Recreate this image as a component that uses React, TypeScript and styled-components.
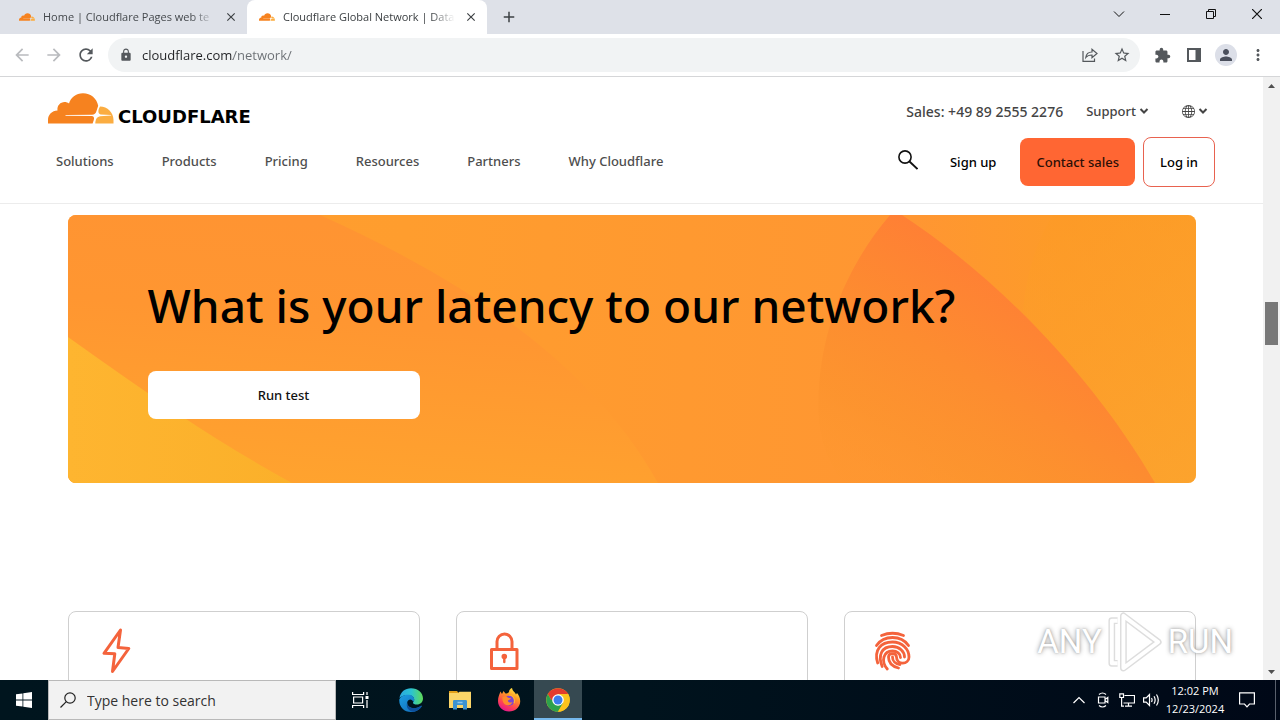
import React from "react";
import styled, { createGlobalStyle } from "styled-components";
import {
  MdArrowBack,
  MdArrowForward,
  MdRefresh,
  MdLock,
  MdStarBorder,
  MdExtension,
  MdPerson,
  MdMoreVert,
  MdClose,
  MdAdd,
} from "react-icons/md";
import { BsGlobe } from "react-icons/bs";

const GlobalStyle = createGlobalStyle`
  * { box-sizing: border-box; }
  body { margin: 0; font-family: "Noto Sans", "Open Sans", sans-serif; color: #222; background: #fff; }
  button, input { font-family: inherit; }
  button { border: 0; padding: 0; background: none; color: inherit; }
  a { color: inherit; text-decoration: none; }
  svg { display: block; flex: none; }
  h2 { margin: 0; }
`;

const Screen = styled.div`
  display: flex;
  flex-direction: column;
  height: 100vh;
  overflow: hidden;
`;

/* ---------- browser chrome ---------- */

const TabStrip = styled.div`
  display: flex;
  height: 34px;
  padding-left: 7px;
  background: #dee1e8;
`;

const Tab = styled.div<{ $active?: boolean }>`
  display: flex;
  align-items: center;
  gap: 8px;
  width: 240px;
  padding: 0 8px 0 12px;
  border-radius: 8px 8px 0 0;
  background: ${(p) => (p.$active ? "#fff" : "transparent")};
  color: ${(p) => (p.$active ? "#3c4043" : "#45494d")};
`;

const TabTitle = styled.span`
  flex: 1;
  min-width: 0;
  white-space: nowrap;
  font-family: "Open Sans", sans-serif;
  font-size: 11px;
  line-height: 16px;
  mask-image: linear-gradient(90deg, #000 86%, transparent);
`;

const TabButton = styled.button`
  display: grid;
  place-items: center;
  width: 16px;
  height: 16px;
  color: #3c4043;
`;

const NewTab = styled(TabButton)`
  align-self: center;
  width: 28px;
  height: 28px;
  margin-left: 8px;
`;

const WindowControls = styled.div`
  display: flex;
  margin-left: auto;
`;

const WindowButton = styled.button`
  display: grid;
  place-items: center;
  width: 46px;
  height: 28px;
  color: #111;
`;

const Toolbar = styled.div`
  display: flex;
  align-items: center;
  height: 43px;
  padding: 0 6px;
  border-bottom: 1px solid #d5d6d8;
`;

const ToolButton = styled.button<{ $dim?: boolean }>`
  display: grid;
  place-items: center;
  width: 32px;
  height: 32px;
  color: ${(p) => (p.$dim ? "#b9bbbe" : "#54585c")};
`;

const Avatar = styled.span`
  display: grid;
  place-items: center;
  width: 22px;
  height: 22px;
  border-radius: 50%;
  background: #dcdfe8;
  color: #4a4f5c;
`;

const Omnibox = styled.label`
  display: flex;
  align-items: center;
  gap: 9px;
  flex: 1;
  height: 34px;
  margin: 0 6px;
  padding: 0 2px 0 11px;
  border-radius: 17px;
  background: #f1f3f4;
  color: #54585c;
`;

const Address = styled.input`
  flex: 1;
  min-width: 0;
  padding: 0;
  border: 0;
  outline: 0;
  font-family: "Open Sans", sans-serif;
  font-size: 13px;
  line-height: 20px;
  color: #202124;
  background: linear-gradient(90deg, #202124 91px, #6a6e73 91px);
  background-clip: text;
  -webkit-background-clip: text;
  -webkit-text-fill-color: transparent;
`;

const OmniboxActions = styled.div`
  display: flex;
`;

/* ---------- page ---------- */

const Viewport = styled.div`
  display: flex;
  flex: 1;
  min-height: 0;
`;

const Page = styled.div`
  position: relative;
  flex: 1;
  min-width: 0;
  overflow: hidden;
`;

const Header = styled.header`
  padding: 16px 48px;
  border-bottom: 1px solid #ececec;
`;

const HeaderRow = styled.div`
  display: flex;
  justify-content: space-between;
`;

const TopRow = styled(HeaderRow)`
  height: 44px;
`;

const NavRow = styled(HeaderRow)`
  align-items: center;
  height: 50px;
`;

const Brand = styled.a`
  display: flex;
  align-items: flex-end;
  gap: 4px;
  height: 31px;
`;

const Wordmark = styled.span`
  font-family: "DejaVu Sans", sans-serif;
  font-size: 18px;
  line-height: 14px;
  font-weight: 700;
  color: #000;
`;

const Utilities = styled.div`
  display: flex;
  align-items: center;
  height: 36px;
  padding-right: 7px;
  font-size: 14px;
  font-weight: 500;
  color: #444;
`;

const UtilityButton = styled.button<{ $gap: number }>`
  display: flex;
  align-items: center;
  gap: 3px;
  margin-left: ${(p) => p.$gap}px;
  font-size: 13px;
  font-weight: 500;
`;

const Nav = styled.nav`
  display: flex;
  gap: 48px;
  padding: 0 0 2px 8px;
  font-size: 13px;
  line-height: 20px;
  font-weight: 500;
  color: #4e4e4e;
`;

const Actions = styled.div`
  display: flex;
  align-items: center;
  gap: 8px;
`;

const SearchButton = styled.button`
  margin-right: 8px;
  padding-bottom: 4px;
`;

const Action = styled.a<{ $kind: "plain" | "solid" | "outline" }>`
  display: flex;
  align-items: center;
  height: ${(p) => (p.$kind === "outline" ? 50 : 48)}px;
  padding: 0 16px;
  border: ${(p) => (p.$kind === "outline" ? "1px solid #e8624f" : "0")};
  border-radius: 8px;
  background: ${(p) => (p.$kind === "solid" ? "#ff6633" : "transparent")};
  font-size: 13px;
  font-weight: 500;
  color: ${(p) => (p.$kind === "solid" ? "#2c0f06" : "#000")};
`;

const Main = styled.main`
  max-width: 1128px;
  margin: 11px auto 0;
`;

const Banner = styled.section`
  position: relative;
  padding: 64px 80px;
  border-radius: 8px;
  overflow: hidden;
`;

const BannerArt = styled.svg`
  position: absolute;
  inset: 0;
  width: 100%;
  height: 100%;
`;

const BannerTitle = styled.h2`
  position: relative;
  font-size: 46px;
  line-height: 52px;
  font-weight: 500;
  color: #000;
`;

const RunButton = styled.button`
  position: relative;
  display: block;
  width: 272px;
  height: 48px;
  margin-top: 40px;
  border-radius: 8px;
  background: #fff;
  font-size: 13px;
  font-weight: 500;
  color: #111;
`;

const Cards = styled.div`
  display: grid;
  grid-template-columns: repeat(3, 1fr);
  gap: 36px;
  margin-top: 128px;
`;

const Card = styled.article`
  min-height: 240px;
  padding: 15px 23px;
  border: 1px solid #cfcfcf;
  border-radius: 8px;
`;

const Watermark = styled.div`
  position: absolute;
  right: 30px;
  bottom: 6px;
  display: flex;
  align-items: center;
  gap: 4px;
  font-family: Roboto, sans-serif;
  font-size: 33px;
  line-height: 64px;
  color: #fff;
  text-shadow: 0 0 5px #999, 0 0 2px #bbb;
`;

const Scrollbar = styled.div`
  display: flex;
  flex-direction: column;
  align-items: center;
  width: 17px;
  background: #f1f1f1;
`;

const ScrollArrow = styled.button`
  display: grid;
  place-items: center;
  width: 17px;
  height: 17px;
  color: #505050;
`;

const ScrollSpace = styled.div<{ $share: number }>`
  flex: ${(p) => p.$share};
`;

const Thumb = styled.div`
  flex: 43;
  width: 13px;
  background: #787878;
`;

/* ---------- taskbar ---------- */

const Taskbar = styled.footer`
  display: flex;
  height: 40px;
  background: linear-gradient(90deg, #00151e, #00131d 50%, #000817);
  color: #fff;
`;

const TaskButton = styled.button<{ $open?: boolean }>`
  display: grid;
  place-items: center;
  width: 48px;
  height: 40px;
  margin-right: 1px;
  background: ${(p) => (p.$open ? "#364951" : "transparent")};
  box-shadow: ${(p) => (p.$open ? "inset 0 -2px #76b9ed" : "none")};
`;

const StartButton = styled(TaskButton)`
  margin-right: 0;
`;

const TaskViewButton = styled(TaskButton)`
  margin-right: 3px;
`;

const TaskSearch = styled.label`
  display: flex;
  align-items: center;
  gap: 11px;
  width: 288px;
  padding-left: 11px;
  border: 1px solid #b9b9b9;
  background: #f2f2f2;
  color: #222;
`;

const TaskSearchInput = styled.input`
  flex: 1;
  min-width: 0;
  padding: 0;
  border: 0;
  outline: 0;
  background: none;
  font-family: "Open Sans", sans-serif;
  font-size: 14px;
  &::placeholder {
    color: #333;
    opacity: 1;
  }
`;

const Tray = styled.div`
  display: flex;
  align-items: center;
  margin-left: auto;
`;

const TrayButton = styled.button<{ $width?: number }>`
  display: grid;
  place-items: center;
  width: ${(p) => p.$width ?? 24}px;
  height: 40px;
`;

const Clock = styled.button`
  width: 64px;
  font-family: "Open Sans", sans-serif;
  font-size: 11px;
  line-height: 18px;
  white-space: nowrap;
  text-align: center;
`;

const ShowDesktop = styled.button`
  width: 5px;
  height: 40px;
  margin-left: 8px;
  border-left: 1px solid #59606c;
`;

/* ---------- drawings ---------- */

const CloudLogo = ({ width, height }: { width: number; height: number }) => (
  <svg width={width} height={height} viewBox="0 0 66 31" aria-hidden="true">
    <path
      fill="#f6821f"
      d="M0 30.500V27C0 21.500 4 17.700 9.500 17.500 8.800 12.500 12.500 9 16.500 9c1.800 0 3.200.5 4.500 1.500C22.500 4.500 28 .2 35 .2c7.800 0 14 5.300 15.200 12.500L48.500 18c-.8 2.600-2 3.500-4.500 3.700L17.500 22v.8l26 .3c2.200.2 3 1.500 2.300 3.800l-1.200 3.600z"
    />
    <path
      fill="#fbad41"
      d="M52 13.500c7.500.2 13.500 5.800 13.500 13.500v3.500H47.300c.3-3.700 1-6.400 4.800-7.200l11-.7v-.5l-10.500-.7c-2.500-.7-3-3.800-.6-7.900z"
    />
  </svg>
);

const Chevron = () => (
  <svg width="10" height="10" viewBox="0 0 10 10" fill="none" stroke="currentColor" strokeWidth="2" aria-hidden="true">
    <path d="M1.500 3 5 6.500 8.500 3" />
  </svg>
);

const BannerBackground = () => (
  <BannerArt viewBox="0 0 1128 268" preserveAspectRatio="none" aria-hidden="true">
    <defs>
      <linearGradient id="base" x1="0" x2="1" y1="0" y2="0">
        <stop offset="0" stopColor="#ff9f2f" />
        <stop offset=".3" stopColor="#ff9d2e" />
        <stop offset=".55" stopColor="#ff9930" />
        <stop offset=".75" stopColor="#ff9632" />
        <stop offset=".88" stopColor="#fd9b29" />
        <stop offset="1" stopColor="#fca22b" />
      </linearGradient>
      <linearGradient id="band" x1=".3" y1="0" x2=".1" y2="1">
        <stop offset="0" stopColor="#ff9432" />
        <stop offset=".35" stopColor="#ff9631" />
        <stop offset="1" stopColor="#ffa42e" />
      </linearGradient>
      <linearGradient id="sail" x1=".6" y1=".2" x2="0" y2="1">
        <stop offset="0" stopColor="#ff7e35" />
        <stop offset=".4" stopColor="#fd8c30" />
        <stop offset=".7" stopColor="#fc932e" stopOpacity=".8" />
        <stop offset="1" stopColor="#fd982e" stopOpacity="0" />
      </linearGradient>
      <linearGradient id="corner" x1="0" y1="0" x2="1" y2="0">
        <stop offset="0" stopColor="#feb530" />
        <stop offset="1" stopColor="#fbb02a" />
      </linearGradient>
      <linearGradient id="edge" x1="0" y1="0" x2="0" y2="1">
        <stop offset="0" stopColor="#fd9a26" />
        <stop offset="1" stopColor="#fca42e" />
      </linearGradient>
    </defs>
    <rect width="1128" height="268" fill="url(#base)" />
    <path d="M0 0H252Q430 80 520 175Q560 215 590 268H0Z" fill="url(#band)" />
    <path d="M0 122Q60 165 112 200T224 268H0Z" fill="url(#corner)" />
    <path d="M985 0Q960 40 955 95L1086 268H1128V0Z" fill="url(#edge)" opacity=".6" />
    <path d="M822 0C775 55 746 130 751 205Q754 240 775 268H1087C1030 170 940 70 834 0Z" fill="url(#sail)" />
  </BannerArt>
);

const CardIcon = ({ children }: { children: React.ReactNode }) => (
  <svg
    width="48"
    height="48"
    viewBox="0 0 48 48"
    fill="none"
    stroke="#f4633c"
    strokeWidth="3"
    strokeLinecap="round"
    strokeLinejoin="round"
    aria-hidden="true"
  >
    {children}
  </svg>
);

const WindowsLogo = () => (
  <svg width="16" height="16" viewBox="0 0 16 16" fill="#fff" aria-hidden="true">
    <path d="M0 2.300 6.500 1.400V7.500H0zM7.300 1.300 16 0v7.500H7.300zM0 8.400h6.500v6.200L0 13.700zM7.300 8.400H16V16l-8.700-1.200z" />
  </svg>
);

const TaskViewIcon = () => (
  <svg width="17" height="16" viewBox="0 0 17 16" fill="none" stroke="#fff" strokeWidth="1.200" aria-hidden="true">
    <path d="M.6 0v2.500h11V0M.6 16v-2.500h11V16M1.600 5h9v6h-9zM15 0v3M15 8v8" />
    <path d="M13.500 4h3v3h-3z" fill="#fff" stroke="none" />
  </svg>
);

const EdgeIcon = () => (
  <svg width="24" height="24" viewBox="0 0 24 24" aria-hidden="true">
    <defs>
      <linearGradient id="edgeTop" x1="0" y1=".4" x2="1" y2=".4">
        <stop offset="0" stopColor="#2aa7e0" />
        <stop offset=".5" stopColor="#2bc3d2" />
        <stop offset="1" stopColor="#5fdb57" />
      </linearGradient>
      <linearGradient id="edgeBody" x1="0" y1="0" x2="1" y2="1">
        <stop offset="0" stopColor="#1b9de2" />
        <stop offset="1" stopColor="#1267b4" />
      </linearGradient>
    </defs>
    <path d="M.5 10C1.500 4 6 .3 12 .3 19 .3 24 5 24 10.500c0 3.700-2.800 6-6 6-2.500 0-4-.8-4-1.800 0-.8 1.200-1 1.200-3C15.200 9 12.500 7 9 7 5 7 2 8.500.5 10z" fill="url(#edgeTop)" />
    <path d="M.3 11.500C1.500 8.500 5 6.800 9 6.800c3.600 0 6.200 2 6.200 4.800 0 1.400-.7 2-1 2.600C13.500 10.500 9 10.800 8.300 14c-.8 4 3.700 6.500 7.700 6.200 2.800-.2 4.700-1.500 6-2.400.5-.3.9.1.6.6C20.500 21.800 16.500 24 12 24 5 24-.2 18.500.3 11.500z" fill="url(#edgeBody)" />
    <path d="M8.300 14c-.9 4 3.700 6.500 7.700 6.200 2.800-.2 4.700-1.500 6-2.400.5-.3.9.1.6.6-1.700 2.800-4.600 4.600-8 5.300C9.500 23.500 6.500 19 8.300 14z" fill="#0d4f9b" />
  </svg>
);

const FolderIcon = () => (
  <svg width="22" height="20" viewBox="0 0 22 20" aria-hidden="true">
    <path d="M0 1h8l2 2.500H0z" fill="#e3a018" />
    <path d="M0 3h9l1.500-1.200H22V18H0z" fill="#fbd568" />
    <path d="M4 19.500v-8.300q0-1.200 1.200-1.200h11.600q1.200 0 1.200 1.200v8.300h-4V15H8v4.500z" fill="#3d93d0" />
    <path d="M8.500 12.500h5" stroke="#8cc6ee" strokeWidth="1.500" />
  </svg>
);

const FirefoxIcon = () => (
  <svg width="24" height="24" viewBox="0 0 24 24" aria-hidden="true">
    <defs>
      <linearGradient id="fox" x1=".8" y1="0" x2=".3" y2="1">
        <stop offset="0" stopColor="#fff24a" />
        <stop offset=".35" stopColor="#ff9b24" />
        <stop offset=".7" stopColor="#ff4650" />
        <stop offset="1" stopColor="#e5148f" />
      </linearGradient>
    </defs>
    <path d="M1 13C1 9 2.300 6.800 3.500 3.500L5 6l1.500-3 2 2.500c1.500 0 2.500-.5 3.500-1.500C12 2 13.500.5 15 0c.3 3 3 4 4 6.500l1-1.500c2 2.500 3.300 5 3.200 8.500C23 19.500 18 23.500 12 23.500S1 19 1 13z" fill="url(#fox)" />
    <circle cx="12.300" cy="12.800" r="5" fill="#7b43d5" />
    <path d="M5.500 9c2-1.300 4-1 5.500.7l3 .6c-.5 1.500-2 1.500-3.200 2.200.2 2 2.500 2.700 4.700 1.500-.8 3-4.500 4.300-7.500 2.500C6 15 5 12 5.500 9z" fill="#ff8b2b" />
    <path d="M12 7c3 0 5.500 2.500 5.500 5.800 0 1-.2 1.700-.5 2.500" fill="none" stroke="#ffb52f" strokeWidth="1.200" />
  </svg>
);

const ChromeIcon = () => (
  <svg width="24" height="24" viewBox="0 0 24 24" aria-hidden="true">
    <circle cx="12" cy="12" r="11.800" fill="#fcc31e" />
    <path d="M1.800 6.100A11.800 11.800 0 0 1 22.200 6.100H12L6.900 15z" fill="#e33b2e" />
    <path d="M1.800 6.100A11.800 11.800 0 0 0 12 23.800L17.100 15 12 12H5.200z" fill="#2da14c" />
    <path d="M22.200 6.100H12L17.100 15 12 23.800A11.800 11.800 0 0 0 22.200 6.100z" fill="#fcc31e" />
    <circle cx="12" cy="12" r="5.800" fill="#fff" />
    <circle cx="12" cy="12" r="4.500" fill="#3b7ded" />
  </svg>
);

const NAV_ITEMS = ["Solutions", "Products", "Pricing", "Resources", "Partners", "Why Cloudflare"];

const TABS = [
  { title: "Home | Cloudflare Pages web te", active: false },
  { title: "Cloudflare Global Network | Data", active: true },
];

export default function App() {
  return (
    <Screen>
      <GlobalStyle />
      <TabStrip>
        {TABS.map((tab) => (
          <Tab key={tab.title} $active={tab.active}>
            <CloudLogo width={16} height={8} />
            <TabTitle>{tab.title}</TabTitle>
            <TabButton aria-label="Close tab">
              <MdClose size={14} />
            </TabButton>
          </Tab>
        ))}
        <NewTab aria-label="New tab">
          <MdAdd size={18} />
        </NewTab>
        <WindowControls>
          <WindowButton aria-label="Search tabs">
            <svg width="12" height="8" viewBox="0 0 12 8" fill="none" stroke="currentColor">
              <path d="m1 1.500 5 5 5-5" />
            </svg>
          </WindowButton>
          <WindowButton aria-label="Minimize">
            <svg width="10" height="10" viewBox="0 0 10 10" stroke="currentColor">
              <path d="M0 5.500h10" />
            </svg>
          </WindowButton>
          <WindowButton aria-label="Restore">
            <svg width="10" height="10" viewBox="0 0 10 10" fill="none" stroke="currentColor">
              <path d="M.5 2.500h7v7h-7zM2.500 2.500v-2h7v7h-2" />
            </svg>
          </WindowButton>
          <WindowButton aria-label="Close window">
            <svg width="10" height="10" viewBox="0 0 10 10" stroke="currentColor" strokeWidth="1.200">
              <path d="m0 0 10 10M10 0 0 10" />
            </svg>
          </WindowButton>
        </WindowControls>
      </TabStrip>

      <Toolbar>
        <ToolButton $dim aria-label="Back">
          <MdArrowBack size={20} />
        </ToolButton>
        <ToolButton $dim aria-label="Forward">
          <MdArrowForward size={20} />
        </ToolButton>
        <ToolButton aria-label="Reload">
          <MdRefresh size={20} />
        </ToolButton>
        <Omnibox>
          <MdLock size={14} />
          <Address aria-label="Address" type="text" defaultValue="cloudflare.com/network/" />
          <OmniboxActions>
            <ToolButton aria-label="Share">
              <svg width="16" height="16" viewBox="0 0 16 16" fill="none" stroke="currentColor" strokeWidth="1.200">
                <path d="M1 4v10.400h11.500V11.500M3.800 10.500C4.200 7 6.500 5 10 5V2.200l5 4.300-5 4.200V8C7.500 8 5.300 8.600 3.800 10.500z" />
              </svg>
            </ToolButton>
            <ToolButton aria-label="Bookmark">
              <MdStarBorder size={18} />
            </ToolButton>
          </OmniboxActions>
        </Omnibox>
        <ToolButton aria-label="Extensions">
          <MdExtension size={17} />
        </ToolButton>
        <ToolButton aria-label="Side panel">
          <svg width="14" height="14" viewBox="0 0 14 14" fill="currentColor">
            <path fillRule="evenodd" d="M0 0h14v14H0zM2 2v10h6.500V2z" />
          </svg>
        </ToolButton>
        <ToolButton aria-label="Profile">
          <Avatar>
            <MdPerson size={18} />
          </Avatar>
        </ToolButton>
        <ToolButton aria-label="Menu">
          <MdMoreVert size={18} />
        </ToolButton>
      </Toolbar>

      <Viewport>
        <Page>
          <Header>
            <TopRow>
              <Brand href="#" aria-label="Cloudflare home">
                <CloudLogo width={66} height={31} />
                <Wordmark>CLOUDFLARE</Wordmark>
              </Brand>
              <Utilities>
                <a href="#sales">Sales: +49 89 2555 2276</a>
                <UtilityButton $gap={23}>
                  Support <Chevron />
                </UtilityButton>
                <UtilityButton $gap={33} aria-label="Language">
                  <BsGlobe size={13} />
                  <Chevron />
                </UtilityButton>
              </Utilities>
            </TopRow>
            <NavRow>
              <Nav>
                {NAV_ITEMS.map((item) => (
                  <a key={item} href="#">
                    {item}
                  </a>
                ))}
              </Nav>
              <Actions>
                <SearchButton aria-label="Search">
                  <svg width="20" height="20" viewBox="0 0 20 20" fill="none" stroke="#111" strokeWidth="1.600">
                    <circle cx="7" cy="7" r="6.100" />
                    <path d="m11.500 11.500 8 7.500" strokeWidth="1.900" />
                  </svg>
                </SearchButton>
                <Action href="#" $kind="plain">
                  Sign up
                </Action>
                <Action href="#" $kind="solid">
                  Contact sales
                </Action>
                <Action href="#" $kind="outline">
                  Log in
                </Action>
              </Actions>
            </NavRow>
          </Header>

          <Main>
            <Banner>
              <BannerBackground />
              <BannerTitle>What is your latency to our network?</BannerTitle>
              <RunButton>Run test</RunButton>
            </Banner>
            <Cards>
              <Card>
                <CardIcon>
                  <path d="M28.500 3 12 26.300l10.800.5L20.500 44.500 36.800 21.500l-10.800-1z" />
                </CardIcon>
              </Card>
              <Card>
                <CardIcon>
                  <path d="M11.500 22.500h25.500v19h-25.500zM17 22v-7.500a7.500 7.500 0 0 1 15 0V22" />
                  <circle cx="24.300" cy="29.500" r="1.300" />
                  <path d="M24.300 30v5" strokeWidth="2.400" />
                </CardIcon>
              </Card>
              <Card>
                <CardIcon>
                  <g strokeWidth="2.800">
                    <path d="M13.500 8.500Q24.500 4 35.500 8.500" />
                    <path d="M8.500 18.500C16 7.800 33 7.800 40.500 18.500" />
                    <path d="M9.700 36C5.500 23 13 15 24.500 15c9.500 0 16.500 7 16.500 15 0 8-12.500 8.500-12.500 0 0-4.500-8-4.500-8 0 0 6 4 9.500 10 11" />
                    <path d="M14.200 39.500C9.500 28 14 19.500 24.500 19.500c7 0 12 5 12 10.500" />
                    <path d="M19.300 42C12.500 34 15.500 24 24.500 24c4.500 0 8 3 8 6.500" />
                    <path d="M24.500 30c0 4 3 7.200 7.500 7.500" />
                  </g>
                </CardIcon>
              </Card>
            </Cards>
          </Main>

          <Watermark>
            ANY
            <svg width="58" height="64" viewBox="0 0 60 64" fill="none" aria-hidden="true">
              <g stroke="#cfcfcf" strokeWidth="7" strokeLinejoin="round" opacity=".7">
                <path d="M18 5v54L54 32zM12 10H6v44h6" />
              </g>
              <g stroke="#fff" strokeWidth="4" strokeLinejoin="round">
                <path d="M18 5v54L54 32zM12 10H6v44h6" />
              </g>
            </svg>
            RUN
          </Watermark>
        </Page>
        <Scrollbar>
          <ScrollArrow aria-label="Scroll up">
            <svg width="7" height="4" viewBox="0 0 7 4" fill="currentColor">
              <path d="M0 4 3.500 0 7 4z" />
            </svg>
          </ScrollArrow>
          <ScrollSpace $share={208} />
          <Thumb />
          <ScrollSpace $share={318} />
          <ScrollArrow aria-label="Scroll down">
            <svg width="7" height="4" viewBox="0 0 7 4" fill="currentColor">
              <path d="m0 0 3.500 4L7 0z" />
            </svg>
          </ScrollArrow>
        </Scrollbar>
      </Viewport>

      <Taskbar>
        <StartButton aria-label="Start">
          <WindowsLogo />
        </StartButton>
        <TaskSearch>
          <svg width="16" height="16" viewBox="0 0 16 16" fill="none" stroke="currentColor" strokeWidth="1.200">
            <circle cx="10" cy="6" r="5.200" />
            <path d="M6.300 9.700.5 15.500" />
          </svg>
          <TaskSearchInput aria-label="Search" type="text" placeholder="Type here to search" />
        </TaskSearch>
        <TaskViewButton aria-label="Task view">
          <TaskViewIcon />
        </TaskViewButton>
        <TaskButton aria-label="Edge">
          <EdgeIcon />
        </TaskButton>
        <TaskButton aria-label="File Explorer">
          <FolderIcon />
        </TaskButton>
        <TaskButton aria-label="Firefox">
          <FirefoxIcon />
        </TaskButton>
        <TaskButton $open aria-label="Chrome">
          <ChromeIcon />
        </TaskButton>
        <Tray>
          <TrayButton aria-label="Show hidden icons">
            <svg width="12" height="8" viewBox="0 0 12 8" fill="none" stroke="currentColor" strokeWidth="1.200">
              <path d="m.5 7 5.500-5.500L11.500 7" />
            </svg>
          </TrayButton>
          <TrayButton aria-label="Meet now">
            <svg width="12" height="16" viewBox="0 0 12 16" fill="none" stroke="currentColor" strokeWidth="1.200">
              <path d="M1.500 5h6.500v6H1.500zM8 7.500 10.800 5.500v5L8 8.500M2 2.500Q5.500-.5 9 2.500M2 13.500q3.500 3 7 0" />
            </svg>
          </TrayButton>
          <TrayButton aria-label="Network">
            <svg width="16" height="14" viewBox="0 0 16 14" fill="none" stroke="currentColor" strokeWidth="1.200">
              <path d="M5.500 2.500h10v7.500H4.500M9.500 10v3M6 13.200h7M.8.800h3.700v3.700H.8zM2.600 4.500v8.700H5" />
            </svg>
          </TrayButton>
          <TrayButton aria-label="Volume">
            <svg width="17" height="14" viewBox="0 0 17 14" fill="none" stroke="currentColor" strokeWidth="1.200">
              <path d="M.6 4.800h2.600L6.500 1.500v11L3.200 9.200H.6zM8.500 5q1.200 2 0 4M11 3.300q2.300 3.700 0 7.400M13.500 1.500q3.600 5.500 0 11" />
            </svg>
          </TrayButton>
          <Clock>
            12:02 PM
            <br />
            12/23/2024
          </Clock>
          <TrayButton $width={40} aria-label="Notifications">
            <svg width="16" height="16" viewBox="0 0 16 16" fill="none" stroke="currentColor" strokeWidth="1.200">
              <path d="M.6.8h14.800v11.200H10.500L8 14.800 5.500 12H.6z" />
            </svg>
          </TrayButton>
          <ShowDesktop aria-label="Show desktop" />
        </Tray>
      </Taskbar>
    </Screen>
  );
}
